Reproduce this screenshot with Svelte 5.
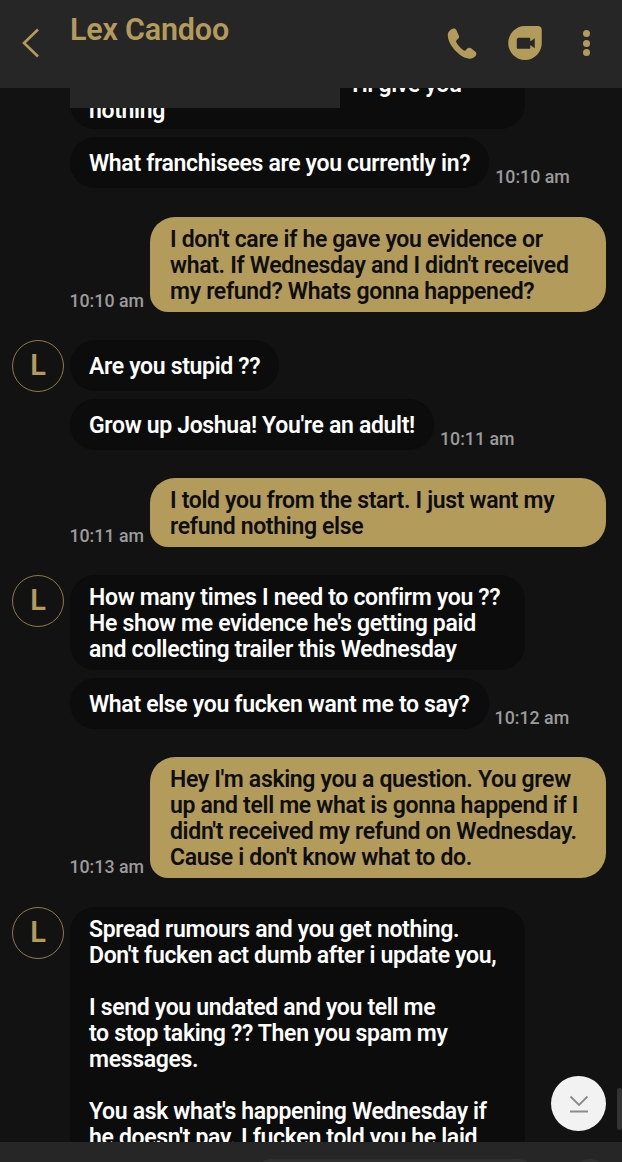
<script lang="ts">
  type Msg = { from: 'them' | 'me'; text: string; time?: string; avatar?: boolean; gap?: number; wide?: boolean; hidden?: boolean };

  const messages: Msg[] = [
    { from: 'them', text: "I'll give you\nnothing", wide: true, hidden: true, gap: 8 },
    { from: 'them', text: 'What franchisees are you currently in?', time: '10:10 am', gap: 29 },
    { from: 'me', text: "I don't care if he gave you evidence or\nwhat. If Wednesday and I didn't received\nmy refund? Whats gonna happened?", time: '10:10 am', gap: 28 },
    { from: 'them', text: 'Are you stupid ??', avatar: true, gap: 8 },
    { from: 'them', text: "Grow up Joshua! You're an adult!", time: '10:11 am', gap: 28 },
    { from: 'me', text: 'I told you from the start. I just want my\nrefund nothing else', time: '10:11 am', gap: 28 },
    { from: 'them', text: "How many times I need to confirm you ??\nHe show me evidence he's getting paid\nand collecting trailer this Wednesday", avatar: true, wide: true, gap: 8 },
    { from: 'them', text: 'What else you fucken want me to say?', time: '10:12 am', gap: 28 },
    { from: 'me', text: "Hey I'm asking you a question. You grew\nup and tell me what is gonna happend if I\ndidn't received my refund on Wednesday.\nCause i don't know what to do.", time: '10:13 am', gap: 29 },
    { from: 'them', text: "Spread rumours and you get nothing.\nDon't fucken act dumb after i update you,\n\nI send you undated and you tell me\nto stop taking ?? Then you spam my\nmessages.\n\nYou ask what's happening Wednesday if\nhe doesn't pay. I fucken told you he laid\nthem off and you still keep asking", avatar: true, wide: true }
  ];
</script>

<div class="phone">
  <header class="topbar">
    <svg class="back" width="20" height="30" viewBox="0 0 20 30" aria-hidden="true">
      <path d="M17 1.500 3 15l14 13.500" fill="none" stroke="#b39b5c" stroke-width="2.600" />
    </svg>
    <h1>Lex Candoo</h1>
    <div class="actions">
      <svg width="31" height="31" viewBox="2.500 2 28 28.500" aria-hidden="true">
        <path d="M8.200 2.400c-2.400.6-5 2.900-5.200 5.600-.4 5.400 3.600 11.600 7.700 15.600 3.600 3.500 8.300 6.800 13 6.600 2.500-.1 5.100-2.300 5.500-3.900.3-1.200-.3-2.100-1.100-2.800l-3.700-2.800c-1.200-.9-2.500-.8-3.500.2l-1.500 1.500c-.6.600-1.400.6-2.100.1-2.700-2-5-4.500-6.500-7.300-.4-.8-.3-1.400.3-2l1.500-1.500c.9-1 1-2.200.3-3.300L10.700 3.500c-.6-.9-1.500-1.300-2.500-1.100z" fill="#b39b5c" />
      </svg>
      <svg class="video" width="34" height="34" viewBox="1.500 1.500 29 29" aria-hidden="true">
        <path d="M16 1.500h11c1.900 0 3.300 1.400 3.300 3.300V16c0 8-6.400 14.500-14.300 14.500S1.700 24 1.700 16 8 1.500 16 1.500z" fill="#b39b5c" />
        <path d="M10 11.500h9.500a1 1 0 0 1 1 1v2.200l3.800-2.700v8.500l-3.800-2.700v2.200a1 1 0 0 1-1 1H10a1 1 0 0 1-1-1v-7a1 1 0 0 1 1-1z" fill="#262626" />
      </svg>
      <div class="dots"><i></i><i></i><i></i></div>
    </div>
  </header>

  <main class="chat">
    <div class="list">
      {#each messages as m}
        <div class="row {m.from}" style="margin-bottom: {m.gap ?? 0}px">
          {#if m.from === 'them'}
            <div class="avatar-slot">
              {#if m.avatar}<div class="avatar">L</div>{/if}
            </div>
          {/if}
          {#if m.from === 'me'}<span class="time">{m.time}</span>{/if}
          <div class="bubble" class:wide={m.wide || m.from === 'me'} class:clipped={m.hidden}>{#if m.hidden}<span class="covered"></span>{/if}{m.text}</div>
          {#if m.from === 'them' && m.time}<span class="time">{m.time}</span>{/if}
        </div>
      {/each}
    </div>
    <div class="redact"></div>
    <button class="jump" aria-label="Scroll to bottom">
      <svg width="22" height="18" viewBox="0 0 22 18" aria-hidden="true">
        <path d="M2.500 1.500 11 10l8.500-8.500M2 16.500h18" fill="none" stroke="#8a8a8a" stroke-width="1.800" />
      </svg>
    </button>
    <div class="scrollbar"></div>
  </main>

  <footer class="composer">
    <div class="input"></div>
    <div class="send"></div>
  </footer>
</div>

<style>
  :global(body) {
    background: #121212;
  }
  .phone {
    width: 622px;
    height: 1162px;
    display: flex;
    flex-direction: column;
    overflow: hidden;
    background: #121212;
    font-family: Roboto, "Liberation Sans", sans-serif;
  }
  .topbar {
    height: 88px;
    flex: none;
    box-sizing: border-box;
    display: flex;
    align-items: flex-start;
    background: #262626;
    padding: 0 32px 0 21px;
  }
  .back {
    margin-top: 28px;
    flex: none;
  }
  h1 {
    margin: 12px 0 0 29px;
    font-size: 30.500px;
    line-height: 36px;
    font-weight: 600;
    color: #b39b5c;
    letter-spacing: -0.2px;
  }
  .actions {
    margin-left: auto;
    margin-top: 26px;
    display: flex;
    align-items: center;
    gap: 30px;
  }
  .dots {
    width: 7px;
    margin-left: 11px;
    display: flex;
    flex-direction: column;
    gap: 2.500px;
  }
  .dots i {
    display: block;
    width: 7px;
    height: 7px;
    border-radius: 50%;
    background: #b39b5c;
  }
  .chat {
    position: relative;
    flex: 1;
    min-height: 0;
    overflow: hidden;
  }
  .list {
    margin-top: -28px;
    padding: 0 16px 0 12px;
  }
  .row {
    display: flex;
    align-items: flex-end;
  }
  .row.me {
    justify-content: flex-end;
  }
  .avatar-slot {
    width: 58px;
    flex: none;
  }
  .avatar {
    box-sizing: border-box;
    width: 52px;
    height: 52px;
    margin-bottom: -1px;
    border: 1.500px solid #8d7a48;
    border-radius: 50%;
    color: #b39b5c;
    font-size: 29px;
    font-weight: 600;
    line-height: 49px;
    text-align: center;
  }
  .row.them:has(.avatar) {
    align-items: flex-start;
  }
  .bubble {
    box-sizing: border-box;
    min-height: 51px;
    padding: 14px 19px 11px;
    border-radius: 25px;
    background: #0c0c0c;
    color: #fff;
    font-size: 23px;
    line-height: 26px;
    font-weight: 600;
    letter-spacing: -0.33px;
    white-space: pre-line;
  }
  .row.me .bubble,
  .bubble.wide {
    padding-top: 10px;
    padding-bottom: 7px;
    width: 455px;
  }
  .bubble.clipped {
    padding-top: 12px;
    padding-bottom: 5px;
  }
  .row.me .bubble {
    width: 456px;
    padding-left: 20px;
    border-bottom-left-radius: 18px;
    background: #b39b5c;
    color: #0e0e0e;
  }
  .covered {
    display: inline-block;
    width: 263px;
  }
  .time {
    flex: none;
    margin: 0 6px 1px;
    color: #9b9b9b;
    font-size: 17.800px;
    line-height: 20px;
    font-weight: 500;
  }
  .redact {
    position: absolute;
    top: 0;
    left: 70px;
    width: 270px;
    height: 20px;
    background: #262626;
  }
  .jump {
    position: absolute;
    top: 988px;
    left: 551px;
    width: 55px;
    height: 55px;
    padding: 0;
    border: 0;
    border-radius: 50%;
    background: #f2f2f2;
    display: flex;
    align-items: center;
    justify-content: center;
  }
  .scrollbar {
    position: absolute;
    top: 1000px;
    right: 0;
    width: 5px;
    height: 42px;
    border-radius: 3px;
    background: #333;
  }
  .composer {
    height: 20px;
    flex: none;
    display: flex;
    align-items: flex-start;
    gap: 36px;
    box-sizing: border-box;
    padding: 17px 12px 0 256px;
    background: #262626;
  }
  .input {
    width: 278px;
    height: 30px;
    border-radius: 15px;
    background: #303030;
  }
  .send {
    width: 40px;
    height: 40px;
    border-radius: 50%;
    background: #303030;
  }
</style>
